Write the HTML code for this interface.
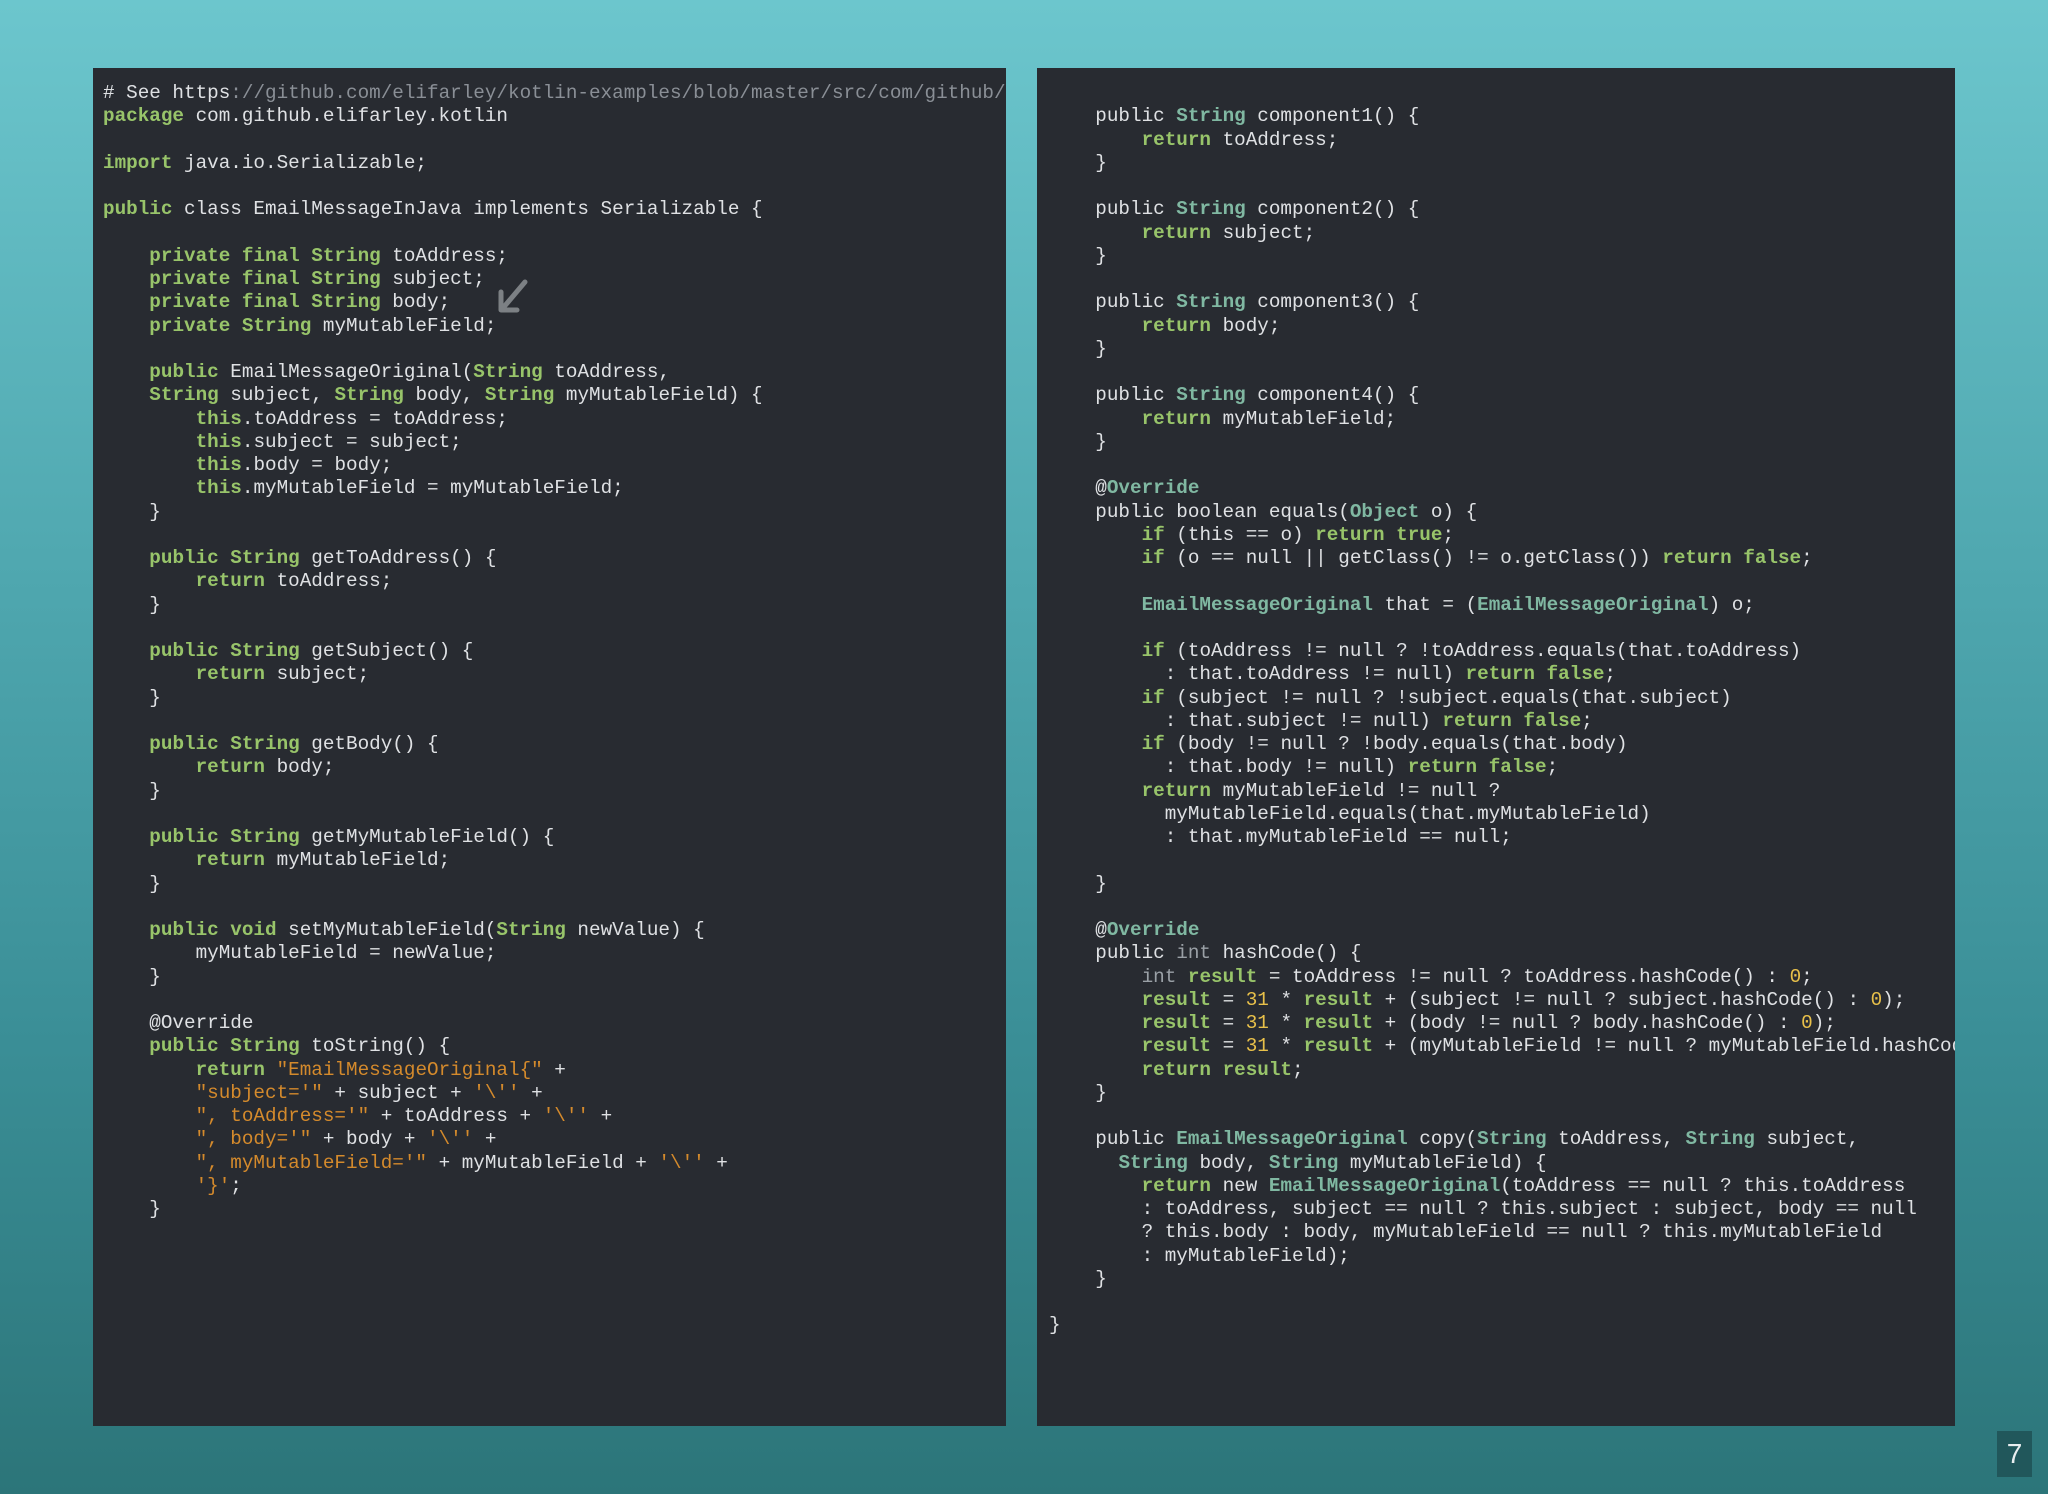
<!DOCTYPE html>
<html><head><meta charset="utf-8"><style>
html,body{margin:0;padding:0}
body{width:2048px;height:1494px;position:relative;overflow:hidden;
background:linear-gradient(180deg,#6cc6cd 0%,#4ea6ae 40%,#3a8e96 70%,#2c7579 100%);
font-family:"Liberation Mono",monospace;}
.panel{position:absolute;background:#282b31;overflow:hidden;}
#l{left:93px;top:68px;width:913px;height:1358px}
#r{left:1037px;top:68px;width:918px;height:1358px}
pre{margin:0;position:absolute;top:14px;font-family:"Liberation Mono",monospace;font-size:19.3px;line-height:23.25px;color:#dfe1e4;white-space:pre}
#l pre{left:10px}
#r pre{left:12px}
.k{color:#98c46a;font-weight:bold}
.t{color:#80b8a2;font-weight:bold}
.s{color:#d48a2c}
.n{color:#e8c04a}
.c{color:#8a8f96}
.g{color:#9aa0a6}
#pg{position:absolute;left:1997px;top:1431px;width:35px;height:46px;background:#21575b;color:#e8eef0;font-family:"Liberation Sans",sans-serif;font-size:28px;line-height:46px;text-align:center}
</style></head><body>
<div class="panel" id="l"><pre><span>#</span> See https<span class="c">://github.com/elifarley/kotlin-examples/blob/master/src/com/github/elifarley/kotlin/</span>
<span class="k">package</span> com.github.elifarley.kotlin

<span class="k">import</span> java.io.Serializable;

<span class="k">public</span> class EmailMessageInJava implements Serializable {

    <span class="k">private final String</span> toAddress;
    <span class="k">private final String</span> subject;
    <span class="k">private final String</span> body;
    <span class="k">private String</span> myMutableField;

    <span class="k">public</span> EmailMessageOriginal(<span class="k">String</span> toAddress,
    <span class="k">String</span> subject, <span class="k">String</span> body, <span class="k">String</span> myMutableField) {
        <span class="k">this</span>.toAddress = toAddress;
        <span class="k">this</span>.subject = subject;
        <span class="k">this</span>.body = body;
        <span class="k">this</span>.myMutableField = myMutableField;
    }

    <span class="k">public String</span> getToAddress() {
        <span class="k">return</span> toAddress;
    }

    <span class="k">public String</span> getSubject() {
        <span class="k">return</span> subject;
    }

    <span class="k">public String</span> getBody() {
        <span class="k">return</span> body;
    }

    <span class="k">public String</span> getMyMutableField() {
        <span class="k">return</span> myMutableField;
    }

    <span class="k">public void</span> setMyMutableField(<span class="k">String</span> newValue) {
        myMutableField = newValue;
    }

    @Override
    <span class="k">public String</span> toString() {
        <span class="k">return</span> <span class="s">"EmailMessageOriginal{"</span> +
        <span class="s">"subject='"</span> + subject + <span class="s">'\''</span> +
        <span class="s">", toAddress='"</span> + toAddress + <span class="s">'\''</span> +
        <span class="s">", body='"</span> + body + <span class="s">'\''</span> +
        <span class="s">", myMutableField='"</span> + myMutableField + <span class="s">'\''</span> +
        <span class="s">'}'</span>;
    }</pre>
<svg style="position:absolute;left:402px;top:210px" width="34" height="36" viewBox="0 0 34 36"><path d="M30 4 L8 30 M6 14 L6 32 L22 32" stroke="#7c8084" stroke-width="5" fill="none" stroke-linecap="round" stroke-linejoin="round"/></svg>
</div>
<div class="panel" id="r"><pre>

    public <span class="t">String</span> component1() {
        <span class="k">return</span> toAddress;
    }

    public <span class="t">String</span> component2() {
        <span class="k">return</span> subject;
    }

    public <span class="t">String</span> component3() {
        <span class="k">return</span> body;
    }

    public <span class="t">String</span> component4() {
        <span class="k">return</span> myMutableField;
    }

    @<span class="t">Override</span>
    public boolean equals(<span class="t">Object</span> o) {
        <span class="k">if</span> (this == o) <span class="k">return true</span>;
        <span class="k">if</span> (o == null || getClass() != o.getClass()) <span class="k">return false</span>;

        <span class="t">EmailMessageOriginal</span> that = (<span class="t">EmailMessageOriginal</span>) o;

        <span class="k">if</span> (toAddress != null ? !toAddress.equals(that.toAddress)
          : that.toAddress != null) <span class="k">return false</span>;
        <span class="k">if</span> (subject != null ? !subject.equals(that.subject)
          : that.subject != null) <span class="k">return false</span>;
        <span class="k">if</span> (body != null ? !body.equals(that.body)
          : that.body != null) <span class="k">return false</span>;
        <span class="k">return</span> myMutableField != null ?
          myMutableField.equals(that.myMutableField)
          : that.myMutableField == null;

    }

    @<span class="t">Override</span>
    public <span class="g">int</span> hashCode() {
        <span class="g">int</span> <span class="k">result</span> = toAddress != null ? toAddress.hashCode() : <span class="n">0</span>;
        <span class="k">result</span> = <span class="n">31</span> * <span class="k">result</span> + (subject != null ? subject.hashCode() : <span class="n">0</span>);
        <span class="k">result</span> = <span class="n">31</span> * <span class="k">result</span> + (body != null ? body.hashCode() : <span class="n">0</span>);
        <span class="k">result</span> = <span class="n">31</span> * <span class="k">result</span> + (myMutableField != null ? myMutableField.hashCode() : <span class="n">0</span>);
        <span class="k">return result</span>;
    }

    public <span class="t">EmailMessageOriginal</span> copy(<span class="t">String</span> toAddress, <span class="t">String</span> subject,
      <span class="t">String</span> body, <span class="t">String</span> myMutableField) {
        <span class="k">return</span> new <span class="t">EmailMessageOriginal</span>(toAddress == null ? this.toAddress
        : toAddress, subject == null ? this.subject : subject, body == null
        ? this.body : body, myMutableField == null ? this.myMutableField
        : myMutableField);
    }

}</pre></div>
<div id="pg">7</div>
</body></html>
